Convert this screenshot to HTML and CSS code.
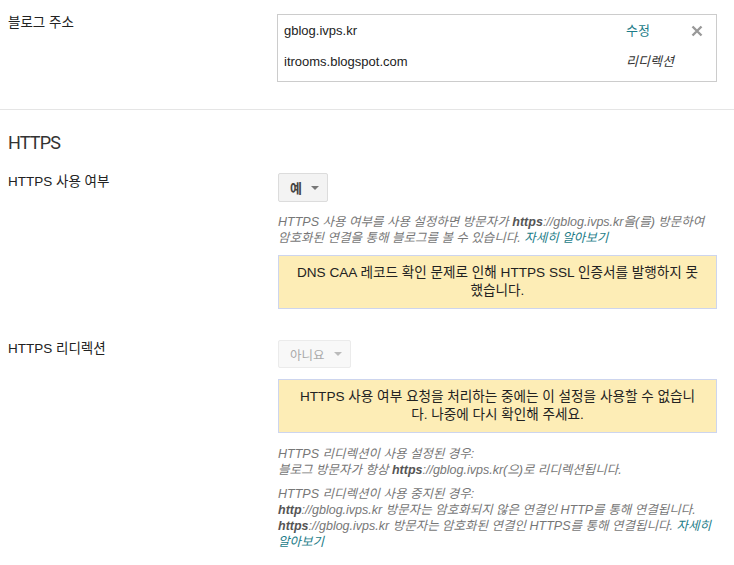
FILE: index.html
```html
<!DOCTYPE html>
<html lang="ko">
<head>
    <meta charset="UTF-8">
    <meta name="viewport" content="width=device-width, initial-scale=1.0">
    <title>블로그 설정</title>
    <link rel="stylesheet" href="styles.css">
</head>
<body>

    <div class="section section-address">
        <div class="row">
            <div class="label">블로그 주소</div>
            <div class="content">
                <div class="address-box">
                    <div class="address-row">
                        <span class="address-name">gblog.ivps.kr</span>
                        <a class="address-action" href="#">수정</a>
                        <span class="address-close">
                            <svg width="12" height="12" viewBox="0 0 12 12"><path d="M1.5 1.5 L10.5 10.5 M10.5 1.5 L1.5 10.5" stroke="#999" stroke-width="2.4" fill="none"/></svg>
                        </span>
                    </div>
                    <div class="address-row">
                        <span class="address-name">itrooms.blogspot.com</span>
                        <span class="address-action redirect">리디렉션</span>
                        <span class="address-close"></span>
                    </div>
                </div>
            </div>
        </div>
    </div>

    <div class="section section-https">
        <h2 class="section-title">HTTPS</h2>

        <div class="row">
            <div class="label">HTTPS 사용 여부</div>
            <div class="content">
                <button class="dropdown">
                    <span class="dropdown-text bold">예</span>
                    <span class="dropdown-arrow"></span>
                </button>
                <p class="help help-first">HTTPS 사용 여부를 사용 설정하면 방문자가 <b>https</b>://gblog.ivps.kr을(를) 방문하여<br>암호화된 연결을 통해 블로그를 볼 수 있습니다. <a href="#">자세히 알아보기</a></p>
                <div class="notice">DNS CAA 레코드 확인 문제로 인해 HTTPS SSL 인증서를 발행하지 못<br>했습니다.</div>
            </div>
        </div>

        <div class="row row-redirect">
            <div class="label">HTTPS 리디렉션</div>
            <div class="content">
                <button class="dropdown disabled" disabled>
                    <span class="dropdown-text">아니요</span>
                    <span class="dropdown-arrow"></span>
                </button>
                <div class="notice notice-tight">HTTPS 사용 여부 요청을 처리하는 중에는 이 설정을 사용할 수 없습니<br>다. 나중에 다시 확인해 주세요.</div>
                <p class="help help-after">HTTPS 리디렉션이 사용 설정된 경우:<br>블로그 방문자가 항상 <b>https</b>://gblog.ivps.kr(으)로 리디렉션됩니다.</p>
                <p class="help help-next">HTTPS 리디렉션이 사용 중지된 경우:<br><b>http</b>://gblog.ivps.kr 방문자는 암호화되지 않은 연결인 HTTP를 통해 연결됩니다.<br><b>https</b>://gblog.ivps.kr 방문자는 암호화된 연결인 HTTPS를 통해 연결됩니다. <a href="#">자세히</a><br><a href="#">알아보기</a></p>
            </div>
        </div>
    </div>

</body>
</html>
```

FILE: styles.css
```css
body {
    margin: 0;
    font-family: "Liberation Sans", "Noto Sans CJK KR", sans-serif;
    font-size: 13px;
    line-height: 18px;
    color: #222;
    background-color: #fff;
}

.section {
    padding: 0 8px;
}

.section-address {
    padding-top: 14px;
    padding-bottom: 27px;
    border-bottom: 1px solid #e5e5e5;
}

.row {
    display: flex;
}

.label {
    width: 270px;
    flex-shrink: 0;
    font-size: 13.5px;
}

.content {
    width: 439px;
}

.address-box {
    margin-left: -1px;
    border: 1px solid #ccc;
    padding: 0 0 4px 6px;
}

.address-row {
    display: flex;
    align-items: center;
    height: 31px;
}

.address-name {
    flex: 1;
}

.address-action {
    width: 65px;
    color: #1c7c88;
    text-decoration: none;
}

.address-action.redirect {
    color: #333;
    font-style: italic;
}

.address-close {
    display: flex;
    width: 25px;
}

.section-title {
    margin: 24px 0 21px;
    font-family: Roboto, "Liberation Sans", sans-serif;
    font-size: 18px;
    font-weight: 400;
    line-height: 18px;
    letter-spacing: -0.8px;
    color: #333;
}

.dropdown {
    display: flex;
    align-items: center;
    height: 29px;
    padding: 0 8px 0 11px;
    border: 1px solid #dcdcdc;
    border-radius: 2px;
    background-color: #f3f3f3;
    font-family: inherit;
    font-size: 13px;
    color: #444;
    cursor: pointer;
}

.dropdown-text.bold {
    font-weight: bold;
}

.dropdown-arrow {
    margin-left: 9px;
    width: 0;
    height: 0;
    border-left: 4px solid transparent;
    border-right: 4px solid transparent;
    border-top: 4px solid #777;
}

.dropdown.disabled {
    height: 28px;
    background-color: #f8f8f8;
    border-color: #ebebeb;
    color: #aaa;
    cursor: default;
}

.dropdown.disabled .dropdown-text {
    font-size: 12.5px;
}

.dropdown.disabled .dropdown-arrow {
    border-top-color: #bbb;
}

.help {
    margin: 0;
    font-size: 12.5px;
    line-height: 16px;
    font-style: italic;
    color: #777;
}

.help b {
    color: #555;
}

.help a {
    color: #1c7c88;
    text-decoration: none;
}

.help-first {
    margin: 12px 0 9px;
}

.help-after {
    margin-top: 13px;
}

.help-next {
    margin-top: 8px;
}

.notice {
    padding: 8px 12px;
    border: 1px solid #cdd5ee;
    background-color: #fdedb6;
    font-size: 13.6px;
    text-align: center;
}

.notice-tight {
    margin-top: 11px;
}

.row-redirect {
    margin-top: 31px;
}
```
